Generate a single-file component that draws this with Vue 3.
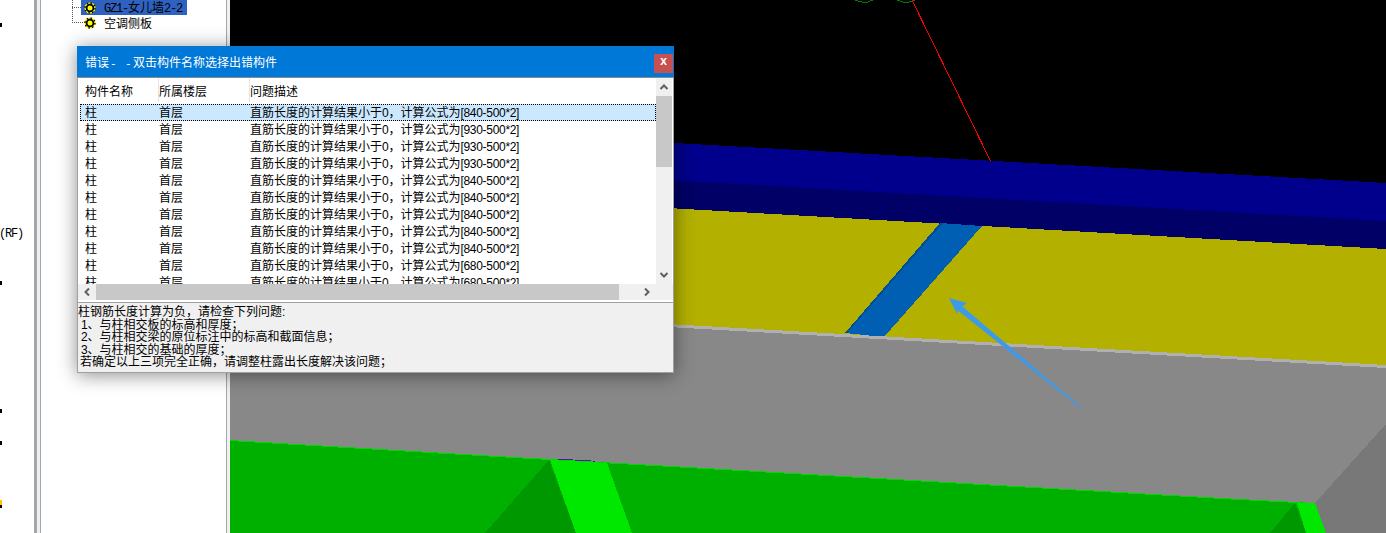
<script setup>
const rows = [840, 930, 930, 930, 840, 840, 840, 840, 840, 680, 680]
const notes = [
  { id: 'a', cls: 'n0', num: '', text: '柱钢筋长度计算为负，请检查下列问题', tail: ':' },
  { id: 'b', cls: 'n1', num: '1', text: '、与柱相交板的标高和厚度；', tail: '' },
  { id: 'c', cls: 'n1', num: '2', text: '、与柱相交梁的原位标注中的标高和截面信息；', tail: '' },
  { id: 'd', cls: 'n1', num: '3', text: '、与柱相交的基础的厚度；', tail: '' },
  { id: 'e', cls: 'n2', num: '', text: '若确定以上三项完全正确，请调整柱露出长度解决该问题；', tail: '' }
]
</script>

<template>
  <div class="page">
    <aside class="far-left">
      <i class="mark m1"></i>
      <div class="rf">(RF)</div>
      <i class="mark m2"></i>
      <i class="mark m3"></i>
      <i class="mark m4"></i>
      <i class="mark m5"></i>
    </aside>
    <div class="splitter"></div>

    <nav class="tree">
      <div class="tree-line"></div>
      <div class="node">
        <span class="branch"></span>
        <div class="label selected">
          <svg class="gear" viewBox="0 0 12 12" width="12" height="12">
            <circle cx="6" cy="6" r="5.5" fill="#ffff00" />
            <circle cx="6" cy="6" r="3.4" fill="none" stroke="#000" stroke-width="1.8" />
            <circle cx="6" cy="6" r="5" fill="none" stroke="#000" stroke-width="1.4" stroke-dasharray="1.6 2.3" />
          </svg>
          <span class="t"><span class="mono">GZ1-</span>女儿墙<span class="mono">2-2</span></span>
        </div>
      </div>
      <div class="node">
        <span class="branch long"></span>
        <div class="label">
          <svg class="gear" viewBox="0 0 12 12" width="12" height="12">
            <circle cx="6" cy="6" r="5.5" fill="#ffff00" />
            <circle cx="6" cy="6" r="3.4" fill="none" stroke="#000" stroke-width="1.8" />
            <circle cx="6" cy="6" r="5" fill="none" stroke="#000" stroke-width="1.4" stroke-dasharray="1.6 2.3" />
          </svg>
          <span class="t">空调侧板</span>
        </div>
      </div>
    </nav>

    <main class="scene">
      <svg viewBox="230 0 1156 533" width="1156" height="533" preserveAspectRatio="none" shape-rendering="crispEdges">
        <rect x="230" y="0" width="1156" height="533" fill="#000" />
        <path d="M855 0L865 3L873 0M897 0L906 3L915 0" fill="none" stroke="#008000" />
        <path d="M912 0L990.5 161" fill="none" stroke="#ff0000" />
        <polygon points="230,118 1386,183 1386,225 230,160" fill="#00008c" />
        <polygon points="230,155 1386,221 1386,255 230,190" fill="#000066" />
        <polygon points="230,183 1386,249 1386,370 230,300" fill="#b3b000" />
        <polygon points="940,223 982,226 884,337 845,333" fill="#005fb2" />
        <polygon points="940,223 943,223.2 847,333.2 845,333" fill="#004f96" />
        <polygon points="230,299 1386,365 1386,533 230,533" fill="#b0b0b0" />
        <polygon points="230,302 1386,368 1386,533 230,533" fill="#888888" />
        <polygon points="1315,503 1386,424 1386,533 1326,533" fill="#787878" />
        <polygon points="230,440 480,455 680,466.5 1240,499 1315,503 1326,533 230,533" fill="#00d800" />
        <polygon points="230,441 480,456 680,467.5 1240,500 1297,503 1306,533 230,533" fill="#00b000" />
        <polygon points="549,460 576,533 485,533" fill="#009800" />
        <polygon points="550,460 607,463 632,533 576,533" fill="#00e800" />
        <polygon points="1295,503 1306,533 1270,533" fill="#009800" />
        <polygon points="1297,503 1315,503 1326,533 1306,533" fill="#00e800" />
        <path d="M558 459.5H573M575 460.5H591M593 461.5H595" stroke="#5a10b0" />
        <polygon
          points="949,298 967,303 962.5,306.5 1082,408 1080,408 958,310.5 957,314"
          fill="#3d9ae8"
          shape-rendering="auto"
        />
      </svg>
    </main>

    <section class="dialog">
      <header class="titlebar">
        <span class="title">错误<span class="dash">- -</span>双击构件名称选择出错构件</span>
        <button class="close">x</button>
      </header>
      <div class="client">
        <div class="list-area">
          <div class="list">
            <div class="row head">
              <span>构件名称</span>
              <span>所属楼层</span>
              <span>问题描述</span>
            </div>
            <div class="rows">
              <div v-for="(len, i) in rows" :key="i" class="row item" :class="{ active: i === 0 }">
                <span>柱</span>
                <span>首层</span>
                <span>直筋长度的计算结果小于<span class="lat">0</span>，计算公式为<span class="lat">[{{ len }}-500*2]</span></span>
              </div>
            </div>
          </div>
          <div class="vbar">
            <div class="btn">
              <svg width="10" height="8" viewBox="0 0 10 8"><path d="M1.5 6L5 2.5L8.500 6" fill="none" stroke="#606060" stroke-width="2" /></svg>
            </div>
            <div class="vthumb"></div>
            <div class="vtrack"></div>
            <div class="btn">
              <svg width="10" height="8" viewBox="0 0 10 8"><path d="M1.5 2L5 5.500L8.500 2" fill="none" stroke="#606060" stroke-width="2" /></svg>
            </div>
          </div>
        </div>
        <div class="hbar">
          <div class="btn hb">
            <svg width="8" height="10" viewBox="0 0 8 10"><path d="M6 1.500L2.500 5L6 8.500" fill="none" stroke="#606060" stroke-width="2" /></svg>
          </div>
          <div class="hthumb"></div>
          <div class="htrack"></div>
          <div class="btn hb">
            <svg width="8" height="10" viewBox="0 0 8 10"><path d="M2 1.500L5.500 5L2 8.500" fill="none" stroke="#606060" stroke-width="2" /></svg>
          </div>
          <div class="corner"></div>
        </div>
        <div class="note">
          <div v-for="n in notes" :key="n.id" :class="n.cls"><span v-if="n.num" class="lat">{{ n.num }}</span>{{ n.text }}<span v-if="n.tail" class="lat">{{ n.tail }}</span></div>
        </div>
      </div>
    </section>
  </div>
</template>

<style scoped>
.page {
  position: relative;
  display: flex;
  width: 1386px;
  height: 533px;
  overflow: hidden;
  background: #fff;
  font-family: "Noto Sans CJK SC", "Liberation Sans", sans-serif;
  font-size: 12px;
  color: #000;
}
.far-left {
  flex: 0 0 34px;
  display: flex;
  flex-direction: column;
  align-items: flex-start;
}
.mark {
  display: block;
  width: 2px;
  height: 4px;
  background: #000;
}
.m1 { margin-top: 23px; }
.m2 { margin-top: 40px; }
.m3 { margin-top: 124px; }
.m4 { margin-top: 28px; }
.m5 {
  margin-top: 55px;
  height: 8px;
  width: 2px;
  background: linear-gradient(#ffc800, #ffc800 60%, #000 60%);
}
.rf {
  margin-top: 200px;
  margin-left: -1px;
  height: 14px;
  line-height: 14px;
  font-family: "Liberation Mono", monospace;
  font-size: 12px;
  letter-spacing: -1.2px;
  white-space: nowrap;
}
.splitter {
  flex: 0 0 7px;
  box-sizing: border-box;
  border-left: 3px solid #a3a6aa;
  border-right: 1px solid #a3a6aa;
  background: #f0f0f0;
}
.tree {
  position: relative;
  flex: 0 0 189px;
  background: linear-gradient(to right, #fff 185px, #a3a6aa 185px, #a3a6aa 186px, #f0f0f0 186px);
}
.tree-line {
  position: absolute;
  left: 31px;
  top: 0;
  height: 23px;
  border-left: 1px dotted #555;
}
.node {
  display: flex;
  align-items: center;
  height: 15px;
  padding-left: 31px;
}
.branch {
  flex: 0 0 9px;
  border-top: 1px dotted #555;
}
.branch.long {
  flex-basis: 13px;
  margin-right: -4px;
}
.label {
  display: flex;
  align-items: center;
  height: 15px;
  padding-right: 5px;
}
.label.selected {
  background: #2f62c0;
}
.gear {
  margin: 0 8px 0 3px;
}
.t {
  white-space: nowrap;
  line-height: 15px;
}
.mono {
  font-family: "Liberation Mono", monospace;
  font-size: 12px;
  letter-spacing: -1.2px;
}
.scene {
  flex: 1;
  min-width: 0;
}
.scene svg {
  display: block;
}
.dialog {
  position: absolute;
  left: 77px;
  top: 46px;
  width: 597px;
  height: 327px;
  box-sizing: border-box;
  display: flex;
  flex-direction: column;
  background: #f0f0f0;
  box-shadow: 0 2px 18px rgba(0, 0, 0, 0.45);
}
.titlebar {
  flex: 0 0 31px;
  display: flex;
  align-items: flex-start;
  justify-content: space-between;
  background: #0078d7;
  color: #fff;
}
.title {
  margin: 7px 0 0 8px;
  line-height: 17px;
  white-space: nowrap;
}
.dash {
  font-family: "Liberation Mono", monospace;
  font-size: 11px;
  letter-spacing: 0.9px;
  margin: 0 0.5px 0 1px;
  white-space: pre;
}
.close {
  margin: 8px 1px 0 0;
  width: 19px;
  height: 19px;
  padding: 0 0 3px;
  border: 0;
  background: #c75050;
  color: #fff;
  font: bold 12px/16px "Liberation Mono", monospace;
}
.client {
  flex: 1;
  min-height: 0;
  display: flex;
  flex-direction: column;
  border: 1px solid #a0a0a0;
  border-top-color: #8c8c8c;
  background: #fff;
}
.list-area {
  flex: 0 0 206px;
  display: flex;
  min-height: 0;
}
.list {
  flex: 1;
  min-width: 0;
  overflow: hidden;
  background: #fff;
}
.row {
  display: grid;
  grid-template-columns: 74px 91px 1fr;
  white-space: nowrap;
}
.head {
  height: 26px;
  margin-left: 2px;
  padding-left: 5px;
  line-height: 25px;
}
.head span:nth-child(1),
.head span:nth-child(2) {
  background: linear-gradient(to left, #e5e5e5 1px, transparent 1px) 0 0 / 100% 24px no-repeat;
}
.rows {
  margin-left: 2px;
}
.item {
  box-sizing: border-box;
  height: 17px;
  line-height: 14px;
  border: 1px solid transparent;
  padding-left: 4px;
}
.item.active {
  background: #cce8ff;
  border: 1px dotted #000;
}
.lat {
  font-family: "Liberation Sans", sans-serif;
  font-size: 12px;
  letter-spacing: -0.3px;
}
.vbar {
  flex: 0 0 16px;
  margin-right: 1px;
  display: flex;
  flex-direction: column;
  background: #f0f0f0;
}
.btn {
  flex: 0 0 18px;
  display: flex;
  align-items: center;
  justify-content: center;
}
.vthumb {
  flex: 0 0 71px;
  background: #c8c8c8;
}
.vtrack {
  flex: 1;
}
.hbar {
  flex: 0 0 16px;
  display: flex;
  background: #f0f0f0;
}
.hthumb {
  flex: 0 0 523px;
  background: #c8c8c8;
}
.htrack {
  flex: 1;
}
.hb {
  margin-top: -1px;
}
.corner {
  flex: 0 0 17px;
}
.note {
  flex: 1;
  margin-top: 2px;
  border-top: 1px solid #a0a0a0;
  background: #f0f0f0;
  padding-top: 2px;
  white-space: nowrap;
  overflow: hidden;
}
.note > div {
  height: 12.5px;
  line-height: 12.5px;
}
.n0 { padding-left: 0; }
.n1 { padding-left: 3px; }
.n2 { padding-left: 2px; }
</style>
